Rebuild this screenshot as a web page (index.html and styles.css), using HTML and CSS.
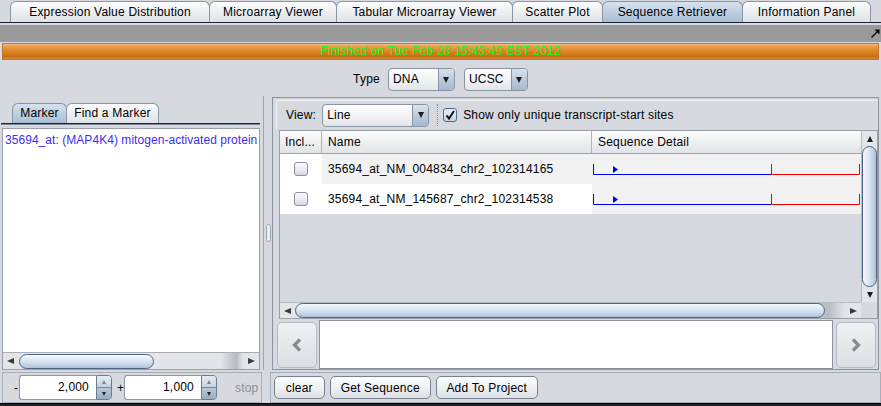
FILE: index.html
```html
<!DOCTYPE html>
<html>
<head>
<meta charset="utf-8">
<link rel="stylesheet" href="styles.css">
</head>
<body>
<div class="app">
  <div class="tabbar">
    <div class="tab t1">Expression Value Distribution</div>
    <div class="tab t2">Microarray Viewer</div>
    <div class="tab t3">Tabular Microarray Viewer</div>
    <div class="tab t4">Scatter Plot</div>
    <div class="tab t5 sel">Sequence Retriever</div>
    <div class="tab t6">Information Panel</div>
  </div>
  <div class="tabline"></div>
  <div class="grayband">
    <svg class="maxicon" width="9" height="9" viewBox="0 0 9 9"><path d="M0.5 8.5L7 2" stroke="#000" stroke-width="1.2" fill="none"/><path d="M3.5 0.5H8.5V5.5Z" fill="#000"/></svg>
  </div>
  <div class="progress">Finished on Tue Feb 28 15:43:49 EST 2012</div>
  <div class="typerow">
    <span class="typelbl">Type</span>
    <div class="combo c-dna"><span class="ctext">DNA</span><span class="carrow"><i class="tri-down"></i></span></div>
    <div class="combo c-ucsc"><span class="ctext">UCSC</span><span class="carrow"><i class="tri-down"></i></span></div>
  </div>
  <div class="main">
    <div class="lcol">
      <div class="ltabs">
        <div class="ltab lt1 sel">Marker</div>
        <div class="ltab lt2">Find a Marker</div>
      </div>
      <div class="ltabline"></div>
      <div class="listbox">
        <div class="listarea"><div class="item">35694_at: (MAP4K4) mitogen-activated protein</div></div>
        <div class="hscroll">
          <div class="sbtn"><i class="tri-left"></i></div>
          <div class="track"><div class="hthumb lthumb"></div></div>
          <div class="sbtn"><i class="tri-right"></i></div>
        </div>
      </div>
    </div>
    <div class="splitter"><div class="grip"></div></div>
    <div class="rcol">
      <div class="rpanel">
        <div class="rtool">
          <span>View:</span>
          <div class="combo c-line"><span class="ctext">Line</span><span class="carrow"><i class="tri-down"></i></span></div>
          <div class="dotsep"></div>
          <div class="cbx"><svg width="12" height="12" viewBox="0 0 12 12"><path d="M2.5 6.5L5 9.5L10 2" stroke="#111" stroke-width="2" fill="none"/></svg></div>
          <span class="cblabel">Show only unique transcript-start sites</span>
        </div>
        <div class="tpane">
          <div class="tview">
            <div class="thead">
              <div class="th c-incl">Incl...</div>
              <div class="th c-name">Name</div>
              <div class="th c-seq">Sequence Detail</div>
            </div>
            <div class="trow odd">
              <div class="td c-incl cellw"><div class="cb"></div></div>
              <div class="td c-name">35694_at_NM_004834_chr2_102314165</div>
              <div class="td c-seq seqcell">
                <svg width="269" height="30"><path d="M1.5 10V20.5H179.5" stroke="#0000f0" fill="none"/><path d="M21 12L26 15.5L21 19Z" fill="#0000f0"/><path d="M179.5 10V20.5H267.5V10" stroke="#ee0000" fill="none"/></svg>
              </div>
            </div>
            <div class="trow even">
              <div class="td c-incl cellw"><div class="cb"></div></div>
              <div class="td c-name">35694_at_NM_145687_chr2_102314538</div>
              <div class="td c-seq seqcell">
                <svg width="269" height="30"><path d="M1.5 10V20.5H179.5" stroke="#0000f0" fill="none"/><path d="M21 12L26 15.5L21 19Z" fill="#0000f0"/><path d="M179.5 10V20.5H267.5V10" stroke="#ee0000" fill="none"/></svg>
              </div>
            </div>
          </div>
          <div class="vscroll">
            <div class="vbtn"><i class="tri-up"></i></div>
            <div class="vtrack"><div class="vthumb"></div></div>
            <div class="vbtn"><i class="tri-down"></i></div>
          </div>
          <div class="hscroll hs2">
            <div class="sbtn"><i class="tri-left"></i></div>
            <div class="track"><div class="hthumb tthumb"></div></div>
            <div class="sbtn"><i class="tri-right"></i></div>
          </div>
          <div class="corner"></div>
        </div>
        <div class="seqrow">
          <div class="nav navl"><svg width="10" height="14" viewBox="0 0 10 14"><path d="M8 1.5L2.5 7L8 12.5" stroke="#8a8a8a" stroke-width="3.2" fill="none"/></svg></div>
          <div class="seqtext"></div>
          <div class="nav navr"><svg width="10" height="14" viewBox="0 0 10 14"><path d="M2 1.5L7.5 7L2 12.5" stroke="#8a8a8a" stroke-width="3.2" fill="none"/></svg></div>
        </div>
      </div>
    </div>
  </div>
  <div class="bottom">
    <div class="lbar">
      <span class="minus">-</span>
      <div class="spin">
        <div class="sfield">2,000</div>
        <div class="sbtns"><div class="sup"><i class="tri-up sm"></i></div><div class="sdown"><i class="tri-down sm"></i></div></div>
      </div>
      <span class="plus">+</span>
      <div class="spin">
        <div class="sfield">1,000</div>
        <div class="sbtns"><div class="sup"><i class="tri-up sm"></i></div><div class="sdown"><i class="tri-down sm"></i></div></div>
      </div>
      <span class="stop">stop</span>
    </div>
    <div class="rbar">
      <div class="btn b-clear">clear</div>
      <div class="btn b-get">Get Sequence</div>
      <div class="btn b-add">Add To Project</div>
    </div>
  </div>
  <div class="edge"></div>
</div>
</body>
</html>
```

FILE: styles.css
```css
* { box-sizing: content-box; }
body {
  margin: 0;
  background: #d6d9df;
  font: 12px "Liberation Sans", Arial, sans-serif;
  letter-spacing: 0.2px;
  color: #000;
}
.app {
  width: 881px;
  height: 406px;
  overflow: hidden;
  display: flex;
  flex-direction: column;
}

/* top tabs */
.tabbar {
  height: 22px;
  flex: none;
  display: flex;
  align-items: flex-end;
  padding-left: 10px;
}
.tab {
  height: 20px;
  line-height: 20px;
  border: 1px solid #8a94a2;
  border-bottom: none;
  border-radius: 6px 6px 0 0;
  background: linear-gradient(#fdfdfe, #eef0f2 45%, #dfe2e7);
  text-align: center;
  margin-left: -1px;
  white-space: nowrap;
}
.tab.sel, .ltab.sel {
  background: linear-gradient(#d6e1ed, #bfcfe1 50%, #a9bed4);
}
.t1 { width: 198px; margin-left: 0; }
.t2 { width: 126px; }
.t3 { width: 175px; }
.t4 { width: 89px; }
.t5 { width: 139px; }
.t6 { width: 127px; }
.tabline {
  height: 1px;
  flex: none;
  background: #1b2535;
}
.grayband {
  flex: none;
  margin-top: 2px;
  height: 17px;
  background: #9a9a9a;
  display: flex;
  align-items: center;
  justify-content: flex-end;
  padding-right: 1px;
}
.maxicon { display: block; }

/* progress */
.progress {
  flex: none;
  margin: 1px 2px 0;
  height: 15px;
  line-height: 15px;
  border: 1px solid #c47428;
  background: linear-gradient(#f5c08c 0%, #eb9e4a 15%, #dc8424 50%, #c86d12 85%, #d68c44 100%);
  color: #22f022;
  text-align: center;
  white-space: nowrap;
}

/* type row */
.typerow {
  flex: none;
  height: 28px;
  padding-top: 8px;
  display: flex;
  justify-content: center;
  align-items: flex-start;
  gap: 9px;
}
.typelbl { line-height: 23px; margin-right: -1px; }

.combo {
  display: flex;
  height: 21px;
  border: 1px solid #8a95a3;
  border-radius: 4px;
  background: linear-gradient(#fdfdfe, #f0f2f4 55%, #e2e5e9);
  overflow: hidden;
}
.ctext {
  flex: 1;
  padding-left: 4px;
  line-height: 21px;
  white-space: nowrap;
}
.carrow {
  width: 15px;
  border-left: 1px solid #8a95a3;
  background: linear-gradient(#d8e2ed, #b9c9da 55%, #a6b9cd);
  display: flex;
  align-items: center;
  justify-content: center;
}
.c-dna { width: 65px; }
.c-ucsc { width: 62px; }
.c-line { width: 105px; margin-left: 6px; }

.tri-down, .tri-up, .tri-left, .tri-right {
  display: block;
  width: 0;
  height: 0;
}
.tri-down {
  border-left: 3.5px solid transparent;
  border-right: 3.5px solid transparent;
  border-top: 6px solid #1e1e1e;
}
.tri-up {
  border-left: 3.5px solid transparent;
  border-right: 3.5px solid transparent;
  border-bottom: 6px solid #1e1e1e;
}
.tri-left {
  border-top: 3px solid transparent;
  border-bottom: 3px solid transparent;
  border-right: 7px solid #3a3a3a;
}
.tri-right {
  border-top: 3px solid transparent;
  border-bottom: 3px solid transparent;
  border-left: 7px solid #3a3a3a;
}
.tri-up.sm {
  border-left-width: 2.5px;
  border-right-width: 2.5px;
  border-bottom: 4px solid #7b8591;
}
.tri-down.sm {
  border-left-width: 2.5px;
  border-right-width: 2.5px;
  border-top: 4px solid #1e2630;
}

/* main */
.main {
  flex: none;
  height: 274px;
  display: flex;
}
.lcol {
  width: 263px;
  flex: none;
  padding-top: 7px;
  display: flex;
  flex-direction: column;
}
.ltabs {
  height: 20px;
  display: flex;
  align-items: flex-end;
  padding-left: 12px;
}
.ltab {
  height: 19px;
  line-height: 19px;
  border: 1px solid #8a94a2;
  border-bottom: none;
  border-radius: 6px 6px 0 0;
  background: linear-gradient(#fdfdfe, #eef0f2 45%, #dfe2e7);
  text-align: center;
  white-space: nowrap;
}
.lt1 { width: 53px; }
.lt2 { width: 91px; margin-left: -1px; }
.ltabline {
  margin-left: 1px;
  width: 259px;
  height: 1px;
  background: #1b2535;
  border-bottom: 1px solid #7d8899;
}
.listbox {
  margin: 3px 3px 0 2px;
  flex: 1;
  border: 1px solid #9aa0a8;
  display: flex;
  flex-direction: column;
  background: #fff;
}
.listarea {
  flex: 1;
  background: #fff;
  overflow: hidden;
}
.item {
  padding: 3px 0 0 2px;
  line-height: 16px;
  color: #3a2ff0;
  white-space: nowrap;
  letter-spacing: 0.05px;
}

.hscroll {
  height: 16px;
  border-top: 1px solid #a9aeb6;
  display: flex;
  background: #e3e5e9;
}
.sbtn {
  width: 15px;
  display: flex;
  align-items: center;
  justify-content: center;
}
.sbtn:last-child { width: 16px; }
.track {
  flex: 1;
  display: flex;
  align-items: center;
  background: linear-gradient(90deg, #e3e5e9 90%, #b7bbc2 97%, #e3e5e9 100%);
}
.hthumb {
  height: 13px;
  border: 1px solid #4d6482;
  border-radius: 8px;
  background: linear-gradient(#f6f9fc, #dbe6f1 45%, #bccee1 85%, #a9bfd6);
}
.lthumb { width: 133px; margin-left: 1px; }
.tthumb { width: 528px; }

.splitter {
  width: 8px;
  flex: none;
  border-left: 1px solid #a0a5ad;
  display: flex;
  align-items: center;
  justify-content: center;
}
.grip {
  width: 3px;
  height: 16px;
  border: 1px solid #9ea3ab;
  border-radius: 3px;
  background: #eceef1;
}

.rcol {
  flex: 1;
  display: flex;
  flex-direction: column;
}
.rpanel {
  margin: 1px 2px 0 0;
  height: 271px;
  border: 1px solid #8d939c;
  display: flex;
  flex-direction: column;
}
.rtool {
  margin: 2px 0 0 3px;
  height: 28px;
  border-top: 1px solid #f1f3f6;
  border-left: 1px solid #f1f3f6;
  padding-left: 9px;
  display: flex;
  align-items: center;
}
.dotsep {
  margin-left: 8px;
  width: 0;
  height: 22px;
  border-left: 1px dotted #8e8e8e;
}
.cbx {
  margin-left: 5px;
  width: 12px;
  height: 12px;
  border: 1px solid #4f6a8e;
  border-radius: 3px;
  background: linear-gradient(#eaf0f6, #c5d4e4);
  display: flex;
}
.cblabel { margin-left: 6px; white-space: nowrap; }

/* table */
.tpane {
  margin: 1px 0 0 6px;
  height: 187px;
  border: 1px solid #9aa0a8;
  display: grid;
  grid-template-columns: 581px 16px;
  grid-template-rows: 171px 16px;
}
.tview {
  background: #d6d9df;
  overflow: hidden;
}
.thead {
  display: flex;
  height: 22px;
  border-bottom: 1px solid #9da3ab;
  background: linear-gradient(#fcfcfd, #eef0f2 50%, #e0e3e7);
}
.th {
  line-height: 22px;
  box-sizing: border-box;
  border-right: 1px solid #b0b5bd;
  white-space: nowrap;
}
.th.c-incl { padding-left: 5px; }
.th.c-name, .th.c-seq { padding-left: 6px; }
.th.c-seq { border-right: none; }
.c-incl { width: 42px; }
.c-name { width: 270px; }
.c-seq { width: 269px; }
.trow {
  display: flex;
  height: 30px;
}
.td {
  box-sizing: border-box;
  line-height: 30px;
  white-space: nowrap;
}
.td.c-name { padding-left: 6px; }
.trow.odd .td { background: #f2f2f2; }
.trow.even .td { background: #fff; }
.trow .td.cellw { background: #fff; }
.trow .td.seqcell { background: #f2f2f2; }
.seqcell svg { display: block; }
.cellw {
  display: flex;
  align-items: center;
  justify-content: center;
}
.cb {
  width: 12px;
  height: 12px;
  border: 1px solid #8792a0;
  border-radius: 3px;
  background: linear-gradient(#fbfbfc, #e8eaee 60%, #d4d8de);
}

.vscroll {
  display: flex;
  flex-direction: column;
  background: #e3e5e9;
  border-left: 1px solid #b6bbc2;
}
.vbtn {
  height: 15px;
  display: flex;
  align-items: center;
  justify-content: center;
}
.vtrack {
  flex: 1;
  display: flex;
  justify-content: center;
}
.vthumb {
  width: 13px;
  border: 1px solid #4d6482;
  border-radius: 8px;
  background: linear-gradient(90deg, #f6f9fc, #dbe6f1 45%, #bccee1 85%, #a9bfd6);
}
.hs2 { border-top: 1px solid #b6bbc2; height: 15px; }
.corner { background: #d6d9df; }

.seqrow {
  margin-top: 1px;
  height: 49px;
  display: flex;
}
.nav {
  width: 38px;
  height: 44px;
  margin-top: 2px;
  border: 1px solid #b5bbc3;
  border-radius: 5px;
  background: linear-gradient(#eef0f3, #dcdfe4);
  display: flex;
  align-items: center;
  justify-content: center;
}
.navl { margin-left: 4px; }
.navr { margin-left: 3px; }
.seqtext {
  margin-left: 2px;
  width: 512px;
  height: 47px;
  border: 1px solid #8f959e;
  background: #fff;
}

/* bottom bars */
.bottom {
  flex: none;
  margin-top: 2px;
  height: 31px;
  display: flex;
  padding-left: 2px;
}
.lbar {
  width: 258px;
  height: 29px;
  border: 1px solid #a9aeb6;
  display: flex;
  align-items: center;
}
.minus { margin-left: 11px; width: 4px; margin-right: 1px; }
.plus { margin-left: 5px; width: 7px; }
.stop { margin-left: 18px; color: #8e8e8e; }
.spin { display: flex; height: 25px; }
.sfield {
  width: 69px;
  padding-right: 7px;
  border: 1px solid #8e97a4;
  border-right: none;
  border-radius: 3px 0 0 3px;
  background: #fff;
  text-align: right;
  line-height: 23px;
}
.sbtns {
  width: 14px;
  height: 23px;
  border: 1px solid #6d7c8f;
  border-radius: 0 4px 4px 0;
  display: flex;
  flex-direction: column;
  overflow: hidden;
}
.sup, .sdown {
  flex: 1;
  display: flex;
  align-items: center;
  justify-content: center;
}
.sup { background: linear-gradient(#e6ecf2, #c6d3e0); }
.sdown { background: linear-gradient(#b8c7d7, #9aaec2); border-top: 1px solid #7a8a9e; }

.rbar {
  margin-left: 8px;
  width: 607px;
  height: 29px;
  border: 1px solid #a9aeb6;
  display: flex;
  align-items: center;
  padding-left: 3px;
}
.btn {
  height: 21px;
  border: 1px solid #77818f;
  border-radius: 5px;
  background: linear-gradient(#fdfdfe, #eff1f3 50%, #dde1e6);
  display: flex;
  align-items: center;
  justify-content: center;
  white-space: nowrap;
}
.b-clear { width: 49px; }
.b-get { width: 99px; margin-left: 5px; }
.b-add { width: 100px; margin-left: 5px; }

.edge {
  flex: none;
  height: 3px;
  background: linear-gradient(#000 0, #000 34%, #3a3a3a 66%, #111 100%);
}
```
